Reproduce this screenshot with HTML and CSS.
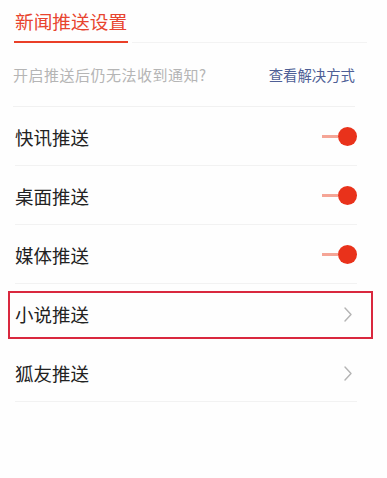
FILE: index.html
```html
<!DOCTYPE html>
<html lang="zh-CN">
<head>
<meta charset="utf-8">
<title>新闻推送设置</title>
<link rel="stylesheet" href="styles.css">
</head>
<body>
<div class="page">
  <div class="tabs">
    <div class="tab">新闻推送设置</div>
    <div class="tab-rest"></div>
  </div>
  <div class="hint">
    <span class="hint-text">开启推送后仍无法收到通知?</span>
    <span class="hint-link">查看解决方式</span>
  </div>
  <div class="list">
    <div class="row">
      <span class="label">快讯推送</span>
      <span class="toggle"><span class="track"></span><span class="knob"></span></span>
    </div>
    <div class="row">
      <span class="label">桌面推送</span>
      <span class="toggle"><span class="track"></span><span class="knob"></span></span>
    </div>
    <div class="row">
      <span class="label">媒体推送</span>
      <span class="toggle"><span class="track"></span><span class="knob"></span></span>
    </div>
    <div class="row row-plain row-marked">
      <span class="label">小说推送</span>
      <svg class="chevron" width="8" height="15" viewBox="0 0 8 15"><path d="M1 1 L7 7.5 L1 14" fill="none" stroke="#b4b4b4" stroke-width="1.4" stroke-linecap="round" stroke-linejoin="round"/></svg>
      <span class="highlight"></span>
    </div>
    <div class="row">
      <span class="label">狐友推送</span>
      <svg class="chevron" width="8" height="15" viewBox="0 0 8 15"><path d="M1 1 L7 7.5 L1 14" fill="none" stroke="#b4b4b4" stroke-width="1.4" stroke-linecap="round" stroke-linejoin="round"/></svg>
    </div>
  </div>
</div>
</body>
</html>
```
FILE: styles.css
```css
html, body {
  margin: 0;
  padding: 0;
  background: #fefefe;
}
body {
  font-family: "Noto Sans CJK SC", "Noto Sans", sans-serif;
  width: 387px;
  height: 478px;
  overflow: hidden;
}
.tabs {
  display: flex;
  align-items: flex-end;
  padding: 8px 20px 0 14px;
}
.tab {
  color: #e8442e;
  font-size: 18.7px;
  line-height: 26px;
  padding: 0 0 7px 1px;
  width: 113px;
  border-bottom: 2px solid #ea3f28;
}
.tab-rest {
  flex: 1;
  margin-left: 4px;
  border-bottom: 1px solid #f3f3f3;
}
.hint {
  display: flex;
  justify-content: space-between;
  align-items: center;
  height: 63px;
  margin: 0 32px 0 13px;
  border-bottom: 1px solid #f1f1f1;
}
.hint-text {
  color: #b5b5b5;
  font-size: 15px;
  letter-spacing: 0.5px;
}
.hint-link {
  color: #4e5f96;
  font-size: 14.4px;
  margin-top: -1px;
}
.list {
  margin: 0 30px 0 15px;
}
.row {
  position: relative;
  display: flex;
  justify-content: space-between;
  align-items: center;
  height: 58px;
  border-bottom: 1px solid #f2f2f2;
}
.row-marked {
  border-bottom-color: transparent;
}
.label {
  color: #222;
  font-size: 18.5px;
  margin-top: 1px;
}
.toggle {
  display: flex;
  align-items: center;
}
.track {
  width: 16px;
  height: 3px;
  background: #f5a596;
}
.knob {
  width: 19px;
  height: 19px;
  border-radius: 50%;
  background: #e9321b;
}
.chevron {
  margin-right: 5px;
  margin-top: 2px;
}
.highlight {
  position: absolute;
  left: -7px;
  top: 7px;
  width: 361px;
  height: 44px;
  border: 2px solid #d9283e;
}
```
